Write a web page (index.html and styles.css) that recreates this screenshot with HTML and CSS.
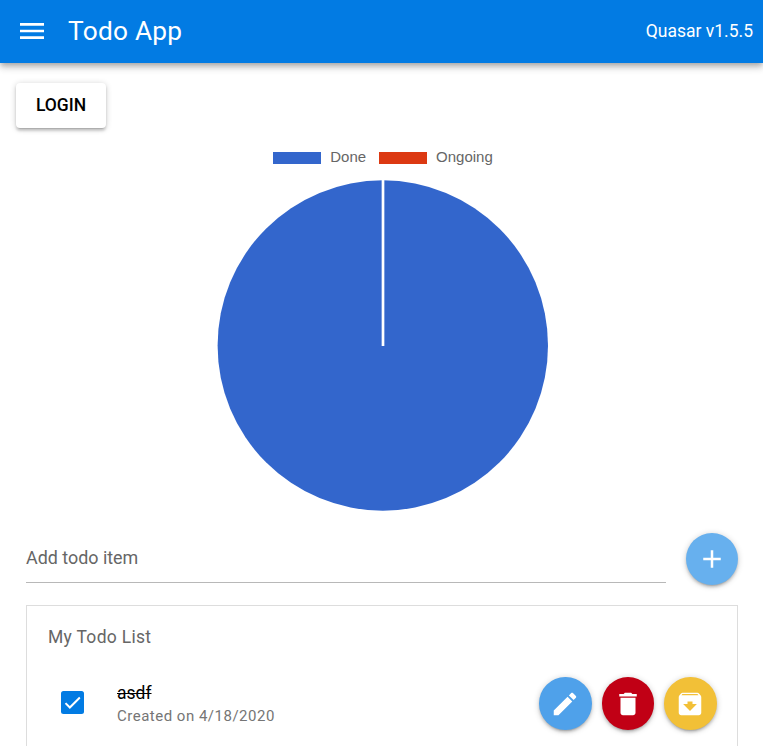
FILE: index.html
```html
<!DOCTYPE html>
<html lang="en">
<head>
<meta charset="utf-8">
<title>Todo App</title>
<link rel="stylesheet" href="styles.css">
</head>
<body>
<header class="toolbar">
  <svg class="menu-icon" viewBox="0 0 24 24"><path d="M3 18h18v-2H3v2zm0-5h18v-2H3v2zm0-7v2h18V6H3z"/></svg>
  <h1 class="title">Todo App</h1>
  <div class="version">Quasar v1.5.5</div>
</header>
<main>
  <button class="login">LOGIN</button>
  <section class="chart">
    <div class="legend">
      <span class="swatch done"></span><span class="legend-label first">Done</span>
      <span class="swatch ongoing"></span><span class="legend-label">Ongoing</span>
    </div>
    <svg class="pie" viewBox="0 0 332 332"><circle cx="165.8" cy="166.5" r="165.2"/><path d="M166 0V167"/></svg>
  </section>
  <form class="add-row">
    <div class="field">Add todo item</div>
    <button type="button" class="fab add"><svg viewBox="0 0 24 24"><path d="M19 13h-6v6h-2v-6H5v-2h6V5h2v6h6v2z"/></svg></button>
  </form>
  <section class="list">
    <h2 class="list-title">My Todo List</h2>
    <div class="item">
      <span class="checkbox"><svg viewBox="0 0 24 24"><path d="M1.73 12.91l6.37 6.37L22.79 4.59"/></svg></span>
      <div class="item-text">
        <div class="name"><s>asdf</s></div>
        <div class="caption">Created on 4/18/2020</div>
      </div>
      <div class="actions">
        <button class="fab edit"><svg viewBox="0 0 24 24"><path d="M3 17.25V21h3.75L17.81 9.94l-3.75-3.75L3 17.25zM20.71 7.04c.39-.39.39-1.02 0-1.41l-2.34-2.34c-.39-.39-1.02-.39-1.41 0l-1.83 1.83 3.75 3.75 1.83-1.83z"/></svg></button>
        <button class="fab delete"><svg viewBox="0 0 24 24"><path d="M6 19c0 1.1.9 2 2 2h8c1.1 0 2-.9 2-2V7H6v12zM19 4h-3.5l-1-1h-5l-1 1H5v2h14V4z"/></svg></button>
        <button class="fab archive"><svg viewBox="0 0 24 24"><path d="M20.54 5.23l-1.39-1.68C18.88 3.21 18.47 3 18 3H6c-.47 0-.88.21-1.16.55L3.46 5.23C3.17 5.57 3 6.02 3 6.5V19c0 1.1.9 2 2 2h14c1.1 0 2-.9 2-2V6.5c0-.48-.17-.93-.46-1.27zM12 17.5L6.5 12H10v-2h4v2h3.5L12 17.5zM5.12 5l.81-1h12l.94 1H5.12z"/></svg></button>
      </div>
    </div>
  </section>
</main>
</body>
</html>
```
FILE: styles.css
```css
* { box-sizing: border-box; }
body { display: flex; flex-direction: column; margin: 0; height: 100vh; background: #fff; color: #000; font: 17.5px/1.5 Roboto, sans-serif; }
button { border: 0; font-family: inherit; padding: 0; }
.toolbar { position: relative; flex: none; display: flex; align-items: center; height: 63px; padding: 0 10px 1px 16px; background: #027be3; color: #fff; box-shadow: 0 2.5px 5px -1px rgba(0,0,0,.2), 0 5px 6px rgba(0,0,0,.14), 0 1px 12px rgba(0,0,0,.12); }
.menu-icon { width: 32px; height: 32px; fill: #fff; }
.title { flex: 1; margin: 0; padding-left: 20px; font-size: 26.25px; font-weight: 400; letter-spacing: .26px; line-height: 40px; }
.version { font-size: 17.5px; }
main { flex: 1; min-height: 0; display: flex; flex-direction: column; align-items: flex-start; padding: 20px 25px 0 26px; }
.login { flex: none; width: 90px; height: 45px; margin-left: -10px; padding-bottom: 2px; border-radius: 4px; background: #fff; color: #000; font-size: 17.5px; font-weight: 500; box-shadow: 0 1px 6px rgba(0,0,0,.2), 0 2.5px 2.5px rgba(0,0,0,.14), 0 3px 1px -2px rgba(0,0,0,.12); }
.chart { flex: none; align-self: center; display: flex; flex-direction: column; align-items: center; margin-top: 19px; }
.legend { display: flex; align-items: center; height: 20px; margin-left: 2px; font: 15px/20px "Liberation Sans", sans-serif; color: #666; }
.swatch { width: 48px; height: 12px; margin-right: 9px; margin-top: 1px; }
.done { background: #3366cc; }
.ongoing { background: #dc3912; }
.first { margin-right: 13px; }
.pie { width: 332px; height: 332px; margin-top: 12px; margin-left: 1px; }
.pie circle { fill: #3366cc; }
.pie path { stroke: #fff; stroke-width: 2.7; }
.add-row { flex: none; display: flex; align-items: flex-start; gap: 20px; width: 100%; margin-top: 22px; }
.field { flex: 1; height: 50px; border-bottom: 1px solid #b8b8b8; color: #666; font-size: 17.9px; line-height: 50px; }
.fab { display: flex; align-items: center; justify-content: center; width: 52.5px; height: 52.5px; border-radius: 50%; box-shadow: 0 1px 6px rgba(0,0,0,.2), 0 2.5px 2.5px rgba(0,0,0,.14), 0 3px 1px -2px rgba(0,0,0,.12); }
.fab svg { width: 30px; height: 30px; fill: #fff; }
.add { background: #67b0ee; width: 52px; height: 52px; }
.list { flex: 1; min-height: 0; width: 100%; margin-top: 20px; border: 1px solid #ddd; border-bottom: 0; padding: 20px 20px 0; }
.list-title { margin: 0; padding-left: 1px; color: #666; font-size: 17.5px; font-weight: 400; line-height: 22px; letter-spacing: .3px; }
.item { display: flex; align-items: center; height: 72px; margin-top: 19px; }
.checkbox { width: 23px; height: 23px; margin: 3px 33px 5px 14px; padding: 1px; border-radius: 2.5px; background: #027be3; }
.checkbox svg { display: block; width: 21px; height: 21px; fill: none; stroke: #fff; stroke-width: 3; transform: scale(.78); }
.item-text { flex: 1; padding-top: 3px; }
.name { font-size: 17.5px; line-height: 24px; }
.caption { color: #757575; font-size: 15px; line-height: 23px; letter-spacing: .5px; }
.actions { display: flex; gap: 10px; margin: 1px .5px 0 0; }
.edit { background: #4fa1ea; }
.delete { background: #c10015; }
.archive { background: #f2c037; }
```
